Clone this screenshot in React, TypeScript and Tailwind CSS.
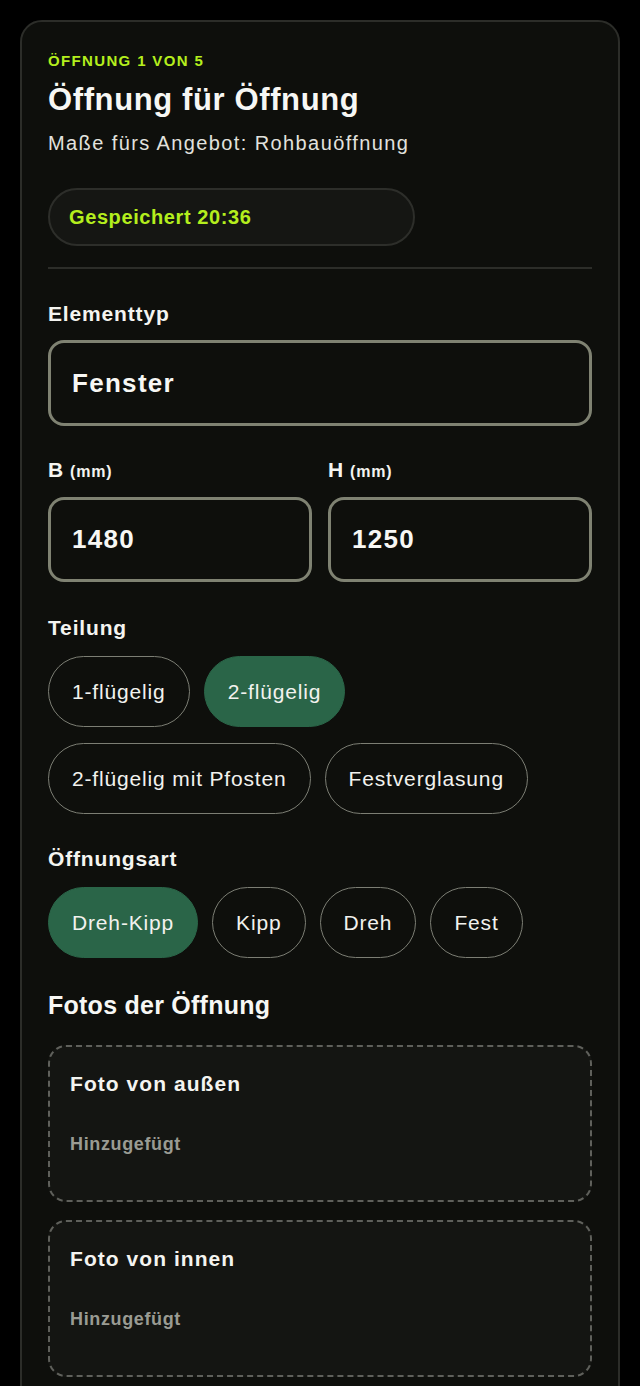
import React from "react";

const teilungOptions = ["1-flügelig", "2-flügelig", "2-flügelig mit Pfosten", "Festverglasung"];
const artOptions = ["Dreh-Kipp", "Kipp", "Dreh", "Fest"];

function Chip({ label, active }: { label: string; active?: boolean }) {
  return (
    <div
      className={
        active
          ? "flex h-[71px] items-center rounded-full border border-[#2a6548] bg-[#2a6548] px-[23px] text-[21px] tracking-[0.04em] text-[#f2f2ee]"
          : "flex h-[71px] items-center rounded-full border border-[#7c7e74] px-[23px] text-[21px] tracking-[0.04em] text-[#f2f2ee]"
      }
    >
      {label}
    </div>
  );
}

function Label({ children }: { children: React.ReactNode }) {
  return (
    <div className="flex h-[26px] items-baseline gap-[6px] text-[21px] font-bold leading-[26px] tracking-[0.04em] text-[#f4f4f0]">
      {children}
    </div>
  );
}

function PhotoCard({ title }: { title: string }) {
  return (
    <div className="flex h-[157px] flex-col rounded-[18px] border-2 border-dashed border-[#5f605b] bg-[#141512] px-[20px] pt-[25px]">
      <div className="text-[21px] font-bold leading-6 tracking-[0.05em] text-[#f4f4f0]">{title}</div>
      <div className="mt-[38px] text-[18px] font-bold leading-5 tracking-[0.035em] text-[#9a9b93]">Hinzugefügt</div>
    </div>
  );
}

export default function App() {
  const [teilung] = React.useState("2-flügelig");
  const [art] = React.useState("Dreh-Kipp");

  return (
    <div className="min-h-[1386px] bg-black px-5 pt-5 font-['Liberation_Sans',Arial,sans-serif]">
      <div className="h-[1400px] rounded-[22px] border-2 border-[#2c2d29] bg-[#0e0f0c] px-[26px] pt-[29px]">
        <div className="text-[15px] font-bold leading-5 tracking-[0.09em] text-[#b4ee1d]">ÖFFNUNG 1 VON 5</div>
        <h1 className="mt-[10px] text-[31px] font-bold leading-[38px] tracking-[0.02em] text-[#f7f7f4]">Öffnung für Öffnung</h1>
        <p className="mt-[11px] text-[20px] leading-[26px] tracking-[0.07em] text-[#e2e2de]">Maße fürs Angebot: Rohbauöffnung</p>

        <div className="mt-[32px] flex h-[58px] w-[367px] items-center rounded-full border-2 border-[#2d2e2a] bg-[#151613] px-[19px] text-[20px] font-bold tracking-[0.03em] text-[#b4ee1d]">
          Gespeichert 20:36
        </div>

        <div className="mt-[21px] h-[2px] bg-[#2c2d29]" />

        <div className="mt-[32px]">
          <Label>Elementtyp</Label>
        </div>
        <div className="mt-[13px] flex h-[86px] items-center rounded-[16px] border-[3px] border-[#7f8272] px-[21px] text-[26px] font-bold tracking-[0.05em] text-[#f7f7f4]">
          Fenster
        </div>

        <div className="mt-[31px] grid grid-cols-2 gap-4">
          {["B", "H"].map((k, i) => (
            <div key={k}>
              <Label>
                <span>{k}</span>
                <span className="text-[16px] leading-none">(mm)</span>
              </Label>
              <div className="mt-[14px] flex h-[85px] items-center rounded-[16px] border-[3px] border-[#7f8272] px-[21px] text-[26px] font-bold tracking-[0.05em] text-[#f7f7f4]">
                {i === 0 ? "1480" : "1250"}
              </div>
            </div>
          ))}
        </div>

        <div className="mt-[33px]">
          <Label>Teilung</Label>
        </div>
        <div className="mt-[15px] flex flex-wrap gap-x-[14px] gap-y-[16px]">
          {teilungOptions.map((o) => (
            <Chip key={o} label={o} active={o === teilung} />
          ))}
        </div>

        <div className="mt-[32px]">
          <Label>Öffnungsart</Label>
        </div>
        <div className="mt-[15px] flex flex-wrap gap-[14px]">
          {artOptions.map((o) => (
            <Chip key={o} label={o} active={o === art} />
          ))}
        </div>

        <h2 className="mt-[32px] text-[25px] font-bold leading-[30px] tracking-[0.01em] text-[#f7f7f4]">Fotos der Öffnung</h2>
        <div className="mt-[25px] flex flex-col gap-[18px]">
          <PhotoCard title="Foto von außen" />
          <PhotoCard title="Foto von innen" />
        </div>
      </div>
    </div>
  );
}
